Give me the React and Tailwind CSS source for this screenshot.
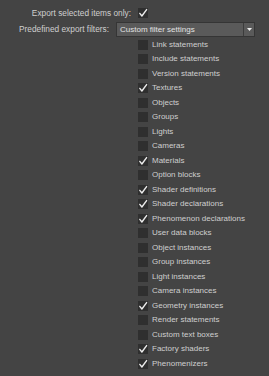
import React from "react";

const items = [
  ["Link statements", false],
  ["Include statements", false],
  ["Version statements", false],
  ["Textures", true],
  ["Objects", false],
  ["Groups", false],
  ["Lights", false],
  ["Cameras", false],
  ["Materials", true],
  ["Option blocks", false],
  ["Shader definitions", true],
  ["Shader declarations", true],
  ["Phenomenon declarations", true],
  ["User data blocks", false],
  ["Object instances", false],
  ["Group instances", false],
  ["Light instances", false],
  ["Camera instances", false],
  ["Geometry instances", true],
  ["Render statements", false],
  ["Custom text boxes", false],
  ["Factory shaders", true],
  ["Phenomenizers", true],
];

function Box({ checked }) {
  return (
    <div className="w-[10px] h-[10px] bg-[#2f2f2f] shrink-0 relative">
      {checked && (
        <svg width="10" height="10" viewBox="0 0 10 10" className="absolute inset-0">
          <path d="M1.8 5.4 L3.9 8 L8.6 1.6" fill="none" stroke="#ececec" strokeWidth="1.4" strokeLinecap="round" strokeLinejoin="round" />
        </svg>
      )}
    </div>
  );
}

export default function App() {
  return (
    <div
      className="w-[269px] h-[376px] bg-[#444444] text-[#cfcfcf] text-[8px] leading-none overflow-hidden"
      style={{ fontFamily: '"Liberation Sans", Arial, sans-serif' }}
    >
      <div className="pt-[6px] flex items-center h-[20px]">
        <div className="w-[131px] text-right text-[8.3px]">Export selected items only:</div>
        <div className="ml-[7px]">
          <Box checked />
        </div>
      </div>
      <div className="mt-[2px] flex items-center h-[15px]">
        <div className="w-[109px] text-right text-[8.3px]">Predefined export filters:</div>
        <div className="ml-[7px] w-[139px] h-[15px] bg-[#5a5a5a] border border-[#353535] flex items-stretch">
          <div className="flex-1 flex items-center pl-[3px] text-[#e2e2e2]">Custom filter settings</div>
          <div className="w-[11px] border-l border-[#3c3c3c] flex items-center justify-center">
            <svg width="5" height="3" viewBox="0 0 5 3">
              <path d="M0 0 L5 0 L2.5 3 Z" fill="#eeeeee" />
            </svg>
          </div>
        </div>
      </div>
      <div className="pl-[138px] pt-[0.5px]">
        {items.map(([label, checked]) => (
          <div key={label} className="h-[14.5px] flex items-center">
            <Box checked={checked} />
            <span className="ml-[4px] whitespace-nowrap">{label}</span>
          </div>
        ))}
      </div>
    </div>
  );
}
